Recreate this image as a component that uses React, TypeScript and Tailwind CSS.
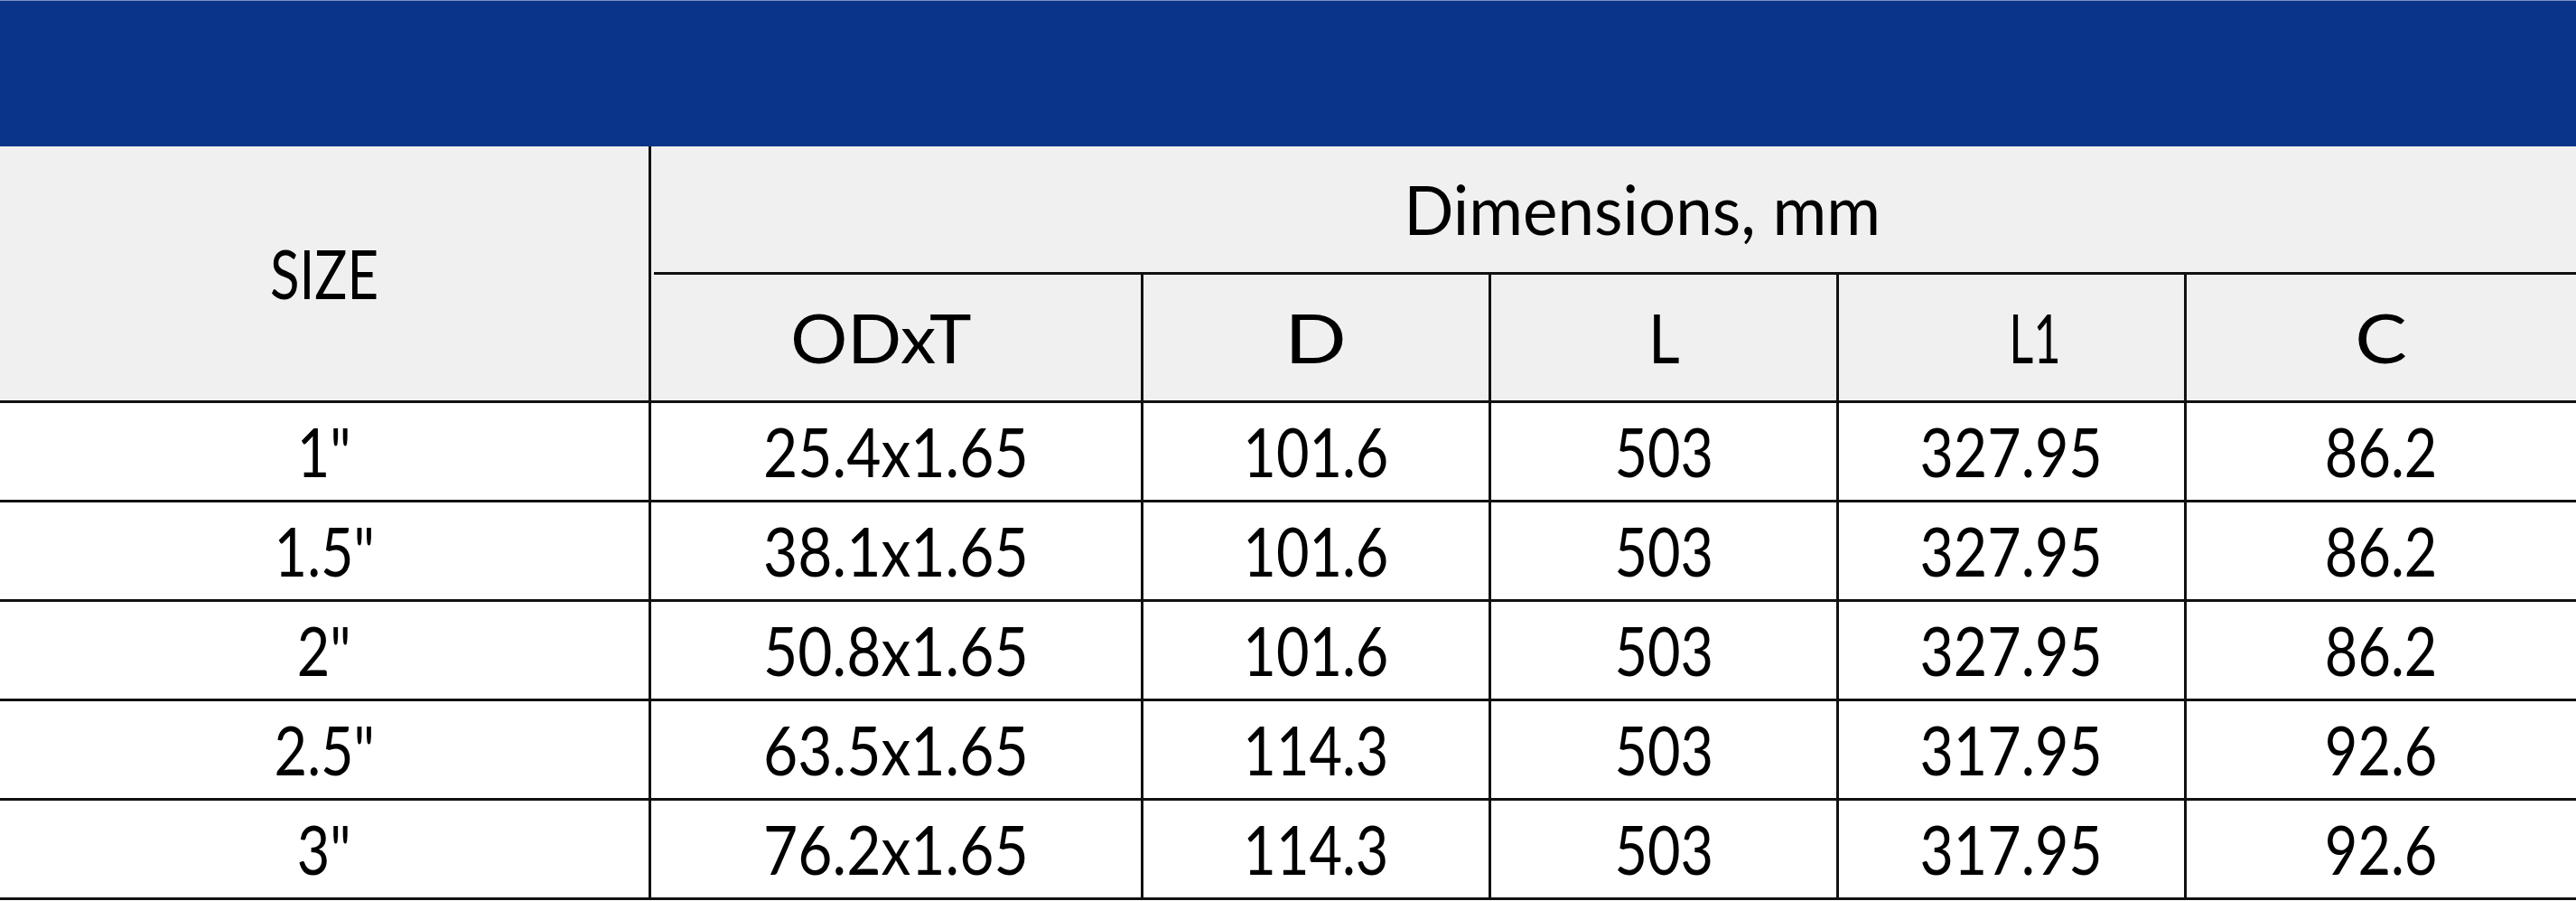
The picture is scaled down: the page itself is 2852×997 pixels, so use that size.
const rows = [
  { size: '1"', odt: "25.4x1.65", d: "101.6", l: "503", l1: "327.95", c: "86.2" },
  { size: '1.5"', odt: "38.1x1.65", d: "101.6", l: "503", l1: "327.95", c: "86.2" },
  { size: '2"', odt: "50.8x1.65", d: "101.6", l: "503", l1: "327.95", c: "86.2" },
  { size: '2.5"', odt: "63.5x1.65", d: "114.3", l: "503", l1: "317.95", c: "92.6" },
  { size: '3"', odt: "76.2x1.65", d: "114.3", l: "503", l1: "317.95", c: "92.6" },
];

// the original face is narrower than Lato for digits, wider for round capitals
function Txt({ children, className = "scale-x-[0.84]" }: { children: React.ReactNode; className?: string }) {
  return <span className={`inline-block whitespace-nowrap ${className}`}>{children}</span>;
}

export default function App() {
  return (
    <div className="w-[2852px] h-[997px] overflow-hidden bg-white text-black text-[75px] leading-none font-['Lato',sans-serif]">
      <div className="h-[162px] bg-[#0a338a] border-t border-[#7f93c2]" />

      {/* header */}
      <div className="flex h-[284px] bg-[#f0f0f0] border-b-[3px] border-[#111]">
        <div className="w-[718px] flex items-center justify-center">
          <Txt className="scale-x-[0.8]">SIZE</Txt>
        </div>
        <div className="flex-1 flex flex-col border-l-[3px] border-[#111]">
          <div className="h-[139px] flex items-center justify-center">
            <Txt className="scale-x-[0.97] translate-x-[32px]">Dimensions, mm</Txt>
          </div>
          <div className="flex flex-1 ml-[3px] border-t-[3px] border-[#111]">
            <div className="w-[539px] flex items-center justify-center"><Txt className="scale-x-[1.05] -translate-x-[18px]">ODxT</Txt></div>
            <div className="w-[385px] flex items-center justify-center border-l-[3px] border-[#111]"><Txt className="scale-x-[1.2]">D</Txt></div>
            <div className="w-[385px] flex items-center justify-center border-l-[3px] border-[#111]"><Txt className="scale-x-[0.9]">L</Txt></div>
            <div className="w-[385px] flex items-center justify-center border-l-[3px] border-[#111]"><Txt className="scale-x-[0.7] translate-x-[26px]">L1</Txt></div>
            <div className="flex-1 flex items-center justify-center border-l-[3px] border-[#111]"><Txt className="scale-x-[1.15]">C</Txt></div>
          </div>
        </div>
      </div>

      {/* body */}
      {rows.map((r) => (
        <div key={r.size} className="flex h-[110px] border-b-[3px] border-[#111]">
          <div className="w-[718px] flex items-center justify-center"><Txt>{r.size}</Txt></div>
          <div className="w-[545px] flex items-center justify-center border-l-[3px] border-[#111]"><Txt className="scale-x-[0.88]">{r.odt}</Txt></div>
          <div className="w-[385px] flex items-center justify-center border-l-[3px] border-[#111]"><Txt>{r.d}</Txt></div>
          <div className="w-[385px] flex items-center justify-center border-l-[3px] border-[#111]"><Txt>{r.l}</Txt></div>
          <div className="w-[385px] flex items-center justify-center border-l-[3px] border-[#111]"><Txt className="scale-x-[0.86]">{r.l1}</Txt></div>
          <div className="flex-1 flex items-center justify-center border-l-[3px] border-[#111]"><Txt>{r.c}</Txt></div>
        </div>
      ))}
    </div>
  );
}
